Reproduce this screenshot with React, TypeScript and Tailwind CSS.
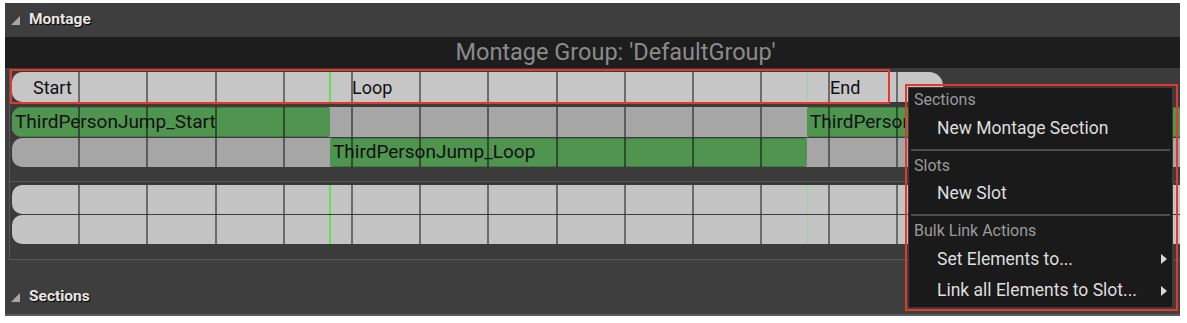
import React from "react";

const COLS = 17;
const FONT = { fontFamily: "Roboto, 'Liberation Sans', sans-serif" };

type Seg = { left: number; width: number; label?: string; clip?: number };

function GridLines() {
  return (
    <div className="relative z-10 flex h-full">
      {Array.from({ length: COLS }).map((_, i) => (
        <div key={i} className="h-full w-[68.2px] shrink-0 border-r-2 border-black/45" />
      ))}
    </div>
  );
}

function Markers() {
  return (
    <>
      <div className="absolute top-0 bottom-0 left-[317px] z-20 w-[2px] bg-[#62df5e]" />
      <div className="absolute top-0 bottom-0 left-[795px] z-20 w-px bg-[#9ad795]" />
    </>
  );
}

function SlotRow({ segs, tone, markers, h }: { segs: Seg[]; tone: string; markers?: boolean; h: string }) {
  return (
    <div className={`relative z-0 w-[1170px] overflow-hidden rounded-l-[10px] ${tone} ${h}`}>
      {segs.map((s, i) => (
        <div
          key={i}
          className="absolute top-0 bottom-0 z-0 rounded-[3px] border-y border-[#3f7a3f] bg-[#4f944f]"
          style={{ left: s.left, width: s.width }}
        />
      ))}
      {segs.map((s, i) => (
        <div
          key={"t" + i}
          className="absolute top-0 bottom-0 z-20 flex items-center overflow-hidden pl-[3px] text-[19px] whitespace-nowrap text-[#111]"
          style={{ left: s.left, width: s.clip }}
        >
          {s.label}
        </div>
      ))}
      <GridLines />
      {markers ? <Markers /> : null}
    </div>
  );
}

function Triangle() {
  return (
    <svg width="9" height="9" viewBox="0 0 9 9" className="shrink-0">
      <polygon points="9,0 9,9 0,9" fill="#a6a6a6" />
    </svg>
  );
}

function PanelHeader({ label }: { label: string }) {
  return (
    <div className="flex h-[34px] items-center gap-[9px] pl-[6px]">
      <Triangle />
      <span className="text-[15.5px] font-bold text-[#e6e6e6] [text-shadow:1px_1px_1px_#000]">{label}</span>
    </div>
  );
}

function MenuHeader({ label, h }: { label: string; h: string }) {
  return <div className={`flex items-center pl-[5px] text-[16px] text-[#9b9b9b] ${h}`}>{label}</div>;
}

function MenuItem({ label, h, sub }: { label: string; h: string; sub?: boolean }) {
  return (
    <div className={`flex items-center justify-between pr-[5px] pl-[28px] text-[17.5px] text-[#dedede] ${h}`}>
      <span>{label}</span>
      {sub ? (
        <svg width="6" height="10" viewBox="0 0 6 10">
          <polygon points="0,0 6,5 0,10" fill="#d8d8d8" />
        </svg>
      ) : null}
    </div>
  );
}

function Sep({ h }: { h: string }) {
  return (
    <div className={`flex items-center px-[2px] ${h}`}>
      <div className="h-[2px] w-full bg-[#4d4d4d]" />
    </div>
  );
}

export default function App() {
  return (
    <div className="relative h-[323px] w-[1187px] overflow-hidden bg-white pt-[3px] pl-[5px]" style={FONT}>
      <div className="flex h-[313px] w-[1175px] flex-col overflow-hidden border-b-2 border-[#5a5a5a] bg-[#3e3e3e]">
        <PanelHeader label="Montage" />
        <div className="flex h-[31px] shrink-0 items-center justify-center bg-[#1d1d1d] pl-[46px] text-[23.5px] text-[#8b8b8b]">
          Montage Group: 'DefaultGroup'
        </div>
        <div className="ml-[4px] h-[192px] shrink-0 overflow-hidden border-b border-l border-[#575757] bg-[#3b3b3b] pt-[4px] pl-[2px]">
          <div className="relative z-0 h-[30px] w-[931px] overflow-hidden rounded-l-[10px] rounded-tr-[14px] bg-[#c6c6c6] text-[18px] text-[#111]">
            <div className="absolute bottom-[1px] left-[21px] z-20">Start</div>
            <div className="absolute bottom-[1px] left-[340px] z-20">Loop</div>
            <div className="absolute bottom-[1px] left-[818px] z-20">End</div>
            <GridLines />
            <Markers />
          </div>
          <div className="mt-[5px] flex flex-col gap-px">
            <SlotRow
              h="h-[30px]"
              tone="bg-[#a6a6a6]"
              segs={[
                { left: 0, width: 318, label: "ThirdPersonJump_Start" },
                { left: 795, width: 380, label: "ThirdPersonJump_Start", clip: 98 },
              ]}
            />
            <SlotRow h="h-[29px]" tone="bg-[#a6a6a6]" segs={[{ left: 318, width: 477, label: "ThirdPersonJump_Loop" }]} />
          </div>
          <div className="mt-[14px] -ml-[2px] flex flex-col gap-px border-t border-[#575757] pt-[3px] pl-[2px]">
            <SlotRow h="h-[29px]" tone="bg-[#c4c4c4]" segs={[]} markers />
            <SlotRow h="h-[29px]" tone="bg-[#c4c4c4]" segs={[]} markers />
          </div>
        </div>
        <div className="flex flex-1 flex-col justify-end">
          <PanelHeader label="Sections" />
        </div>
      </div>

      <div className="absolute top-[87px] left-[908px] z-50 flex h-[221px] w-[265px] flex-col border border-[#3a3a3a] bg-[#1a1a1a] pt-px">
        <MenuHeader label="Sections" h="h-[22px]" />
        <MenuItem label="New Montage Section" h="h-[34px]" />
        <Sep h="h-[10px]" />
        <MenuHeader label="Slots" h="h-[22px]" />
        <MenuItem label="New Slot" h="h-[32px]" />
        <Sep h="h-[12px]" />
        <MenuHeader label="Bulk Link Actions" h="h-[20px]" />
        <MenuItem label="Set Elements to..." h="h-[36px]" sub />
        <MenuItem label="Link all Elements to Slot..." h="h-[27px]" sub />
      </div>

      <div className="absolute top-[69px] left-[10px] z-50 h-[35px] w-[880px] border-2 border-[#e3392d]" />
      <div className="absolute top-[84px] left-[905px] z-50 h-[227px] w-[273px] border-2 border-[#e3392d]" />
    </div>
  );
}
